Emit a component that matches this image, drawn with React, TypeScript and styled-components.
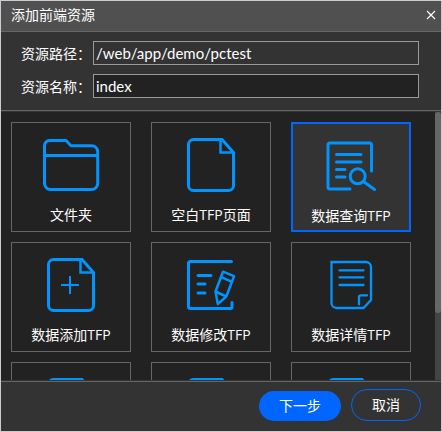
import React, { useState } from "react";
import styled, { createGlobalStyle } from "styled-components";

const GlobalStyle = createGlobalStyle`
  *, *::before, *::after { box-sizing: border-box; }
  body { margin: 0; background: #333; }
  body, button, input {
    font-family: "Open Sans", "Noto Sans CJK SC", sans-serif;
    font-size: 14px;
    line-height: 20px;
    color: #fff;
  }
`;

const Dialog = styled.section`
  display: flex;
  flex-direction: column;
  height: 100vh;
  border: 1px solid #ccc;
  background: #333;
`;

const TitleBar = styled.header`
  display: flex;
  align-items: center;
  justify-content: space-between;
  height: 31px;
  padding: 0 5px 2px 10px;
  background: #505050;
  border-bottom: 1px solid #666;
`;

const Title = styled.h1`
  margin: 0;
  font-size: 14px;
  font-weight: 400;
`;

const CloseButton = styled.button`
  display: flex;
  padding: 0;
  border: 0;
  background: none;
  cursor: pointer;
`;

const Form = styled.form`
  display: flex;
  flex-direction: column;
  gap: 9px;
  padding: 9px 22px 12px 20px;
  border-bottom: 1px solid #666;
`;

const Field = styled.div`
  display: flex;
  align-items: center;
`;

const FieldLabel = styled.label`
  flex: 0 0 72px;
  padding-top: 2px;
`;

const TextInput = styled.input`
  flex: 1;
  min-width: 0;
  height: 24px;
  padding: 0 2px;
  border: 1px solid #999;
  border-radius: 0;
  outline: 0;
  background: #222;
  font-family: Lato, "Noto Sans CJK SC", sans-serif;
  font-size: 15px;

  &:read-only { background: #333; }
`;

const ListArea = styled.main`
  display: flex;
  flex: 1;
  min-height: 0;
  border-top: 1px solid #333;
  border-bottom: 1px solid #333;
  background: #222;
`;

const CardGrid = styled.div`
  display: grid;
  flex: 1;
  grid-template-columns: repeat(auto-fill, 120px);
  align-content: start;
  gap: 10px 20px;
  padding: 10px;
  overflow: hidden;
`;

const Card = styled.button<{ $selected: boolean }>`
  display: flex;
  flex-direction: column;
  align-items: center;
  justify-content: flex-start;
  gap: 10px;
  height: 110px;
  padding: 12px 0 0;
  border: ${(p) => (p.$selected ? "2px solid #06f" : "1px solid #666")};
  background: ${(p) => (p.$selected ? "#333" : "#222")};
  cursor: pointer;
`;

const CardLabel = styled.span`
  height: 20px;
`;

const ScrollTrack = styled.div`
  flex: 0 0 6px;
  background: #444;
`;

const ScrollThumb = styled.div`
  height: 75%;
  border-radius: 3px;
  background: #666;
`;

const Footer = styled.footer`
  display: flex;
  align-items: flex-end;
  justify-content: flex-end;
  gap: 10px;
  height: 50px;
  padding: 0 20px 10px;
  border-top: 1px solid #666;
`;

const ActionButton = styled.button<{ $primary?: boolean }>`
  height: ${(p) => (p.$primary ? "30px" : "32px")};
  padding: 0 20px;
  border: ${(p) => (p.$primary ? "0" : "1px solid #06f")};
  border-radius: 16px;
  background: ${(p) => (p.$primary ? "#06f" : "transparent")};
  cursor: pointer;
`;

const IconSvg = styled.svg`
  display: block;
  flex: none;
  fill: none;
  stroke: #0094ff;
  stroke-width: 3;
  stroke-linejoin: round;
  stroke-linecap: round;
`;

type IconName = "folder" | "page" | "query" | "add" | "edit" | "detail";

const pageOutline = (
  <>
    <path d="M41 4.5H12.5a5 5 0 0 0-5 5v41a5 5 0 0 0 5 5h35a5 5 0 0 0 5-5V17.5z" strokeLinejoin="miter" />
    <path d="M39.5 5v12.5h12.5" strokeWidth="2.5" strokeLinejoin="miter" />
  </>
);

const drawings: Record<IconName, React.ReactNode> = {
  folder: (
    <path d="M3.5 20.5h53M8.5 5.5H25l5 5.3h20.7a6 6 0 0 1 6 6v31.7a6 6 0 0 1-6 6H9.5a6 6 0 0 1-6-6v-38a5 5 0 0 1 5-5z" />
  ),
  page: pageOutline,
  query: (
    <>
      <path d="M29 53H9a2 2 0 0 1-2-2V9a2 2 0 0 1 2-2h39.5a2 2 0 0 1 2 2v26" />
      <path d="M15.5 18.5H40M15.5 26H40M15.5 33.5H24M15.5 41H24" />
      <circle cx="36.7" cy="40.3" r="7.5" />
      <path d="M42.5 45.5l11 8" />
    </>
  ),
  add: (
    <>
      {pageOutline}
      <path d="M20 30h18M29 21v18" strokeWidth="2" strokeLinecap="butt" />
    </>
  ),
  edit: (
    <>
      <path d="M50.5 6.5h-41a2 2 0 0 0-2 2v43a2 2 0 0 0 2 2h40a1.5 1.5 0 0 0 1.5-1.5v-4.5" />
      <path d="M17 20.5h13M17 29h7M17 38h7" />
      <path
        d="M42 16.7l11 4.5L45.3 41.5 36.8 49l-2.3-12.5zM40.3 22.2l10.7 4.6M34.5 36.5l10.8 5"
        strokeWidth="2.5"
      />
    </>
  ),
  detail: (
    <g strokeWidth="2.3">
      <path
        d="M10.5 7H45a5 5 0 0 1 5 5v33l-7.5 8h-27a5 5 0 0 1-5-5z"
        strokeLinejoin="miter"
      />
      <path d="M18.5 15.3h24M18.5 22.3h24M18.5 30h24M46 40.3h-6a2 2 0 0 0-2 2v7" />
    </g>
  ),
};

const Icon = ({ name }: { name: IconName }) => (
  <IconSvg width="60" height="60" viewBox="0 0 60 60" aria-hidden="true">
    {drawings[name]}
  </IconSvg>
);

const cards: { icon: IconName; label: string }[] = [
  { icon: "folder", label: "文件夹" },
  { icon: "page", label: "空白TFP页面" },
  { icon: "query", label: "数据查询TFP" },
  { icon: "add", label: "数据添加TFP" },
  { icon: "edit", label: "数据修改TFP" },
  { icon: "detail", label: "数据详情TFP" },
  { icon: "page", label: "" },
  { icon: "page", label: "" },
  { icon: "page", label: "" },
];

export default function App() {
  const [selected, setSelected] = useState(2);
  const [name, setName] = useState("index");

  return (
    <>
      <GlobalStyle />
      <Dialog>
        <TitleBar>
          <Title>添加前端资源</Title>
          <CloseButton type="button">
            <svg width="10" height="10" viewBox="0 0 10 10" stroke="#fff" strokeWidth="1.2">
              <path d="M1 1l8 8M9 1L1 9" />
            </svg>
          </CloseButton>
        </TitleBar>
        <Form>
          <Field>
            <FieldLabel htmlFor="path">资源路径：</FieldLabel>
            <TextInput id="path" readOnly value="/web/app/demo/pctest" />
          </Field>
          <Field>
            <FieldLabel htmlFor="name">资源名称：</FieldLabel>
            <TextInput id="name" value={name} onChange={(e) => setName(e.target.value)} />
          </Field>
        </Form>
        <ListArea>
          <CardGrid>
            {cards.map((card, i) => (
              <Card key={i} type="button" $selected={i === selected} onClick={() => setSelected(i)}>
                <Icon name={card.icon} />
                <CardLabel>{card.label}</CardLabel>
              </Card>
            ))}
          </CardGrid>
          <ScrollTrack>
            <ScrollThumb />
          </ScrollTrack>
        </ListArea>
        <Footer>
          <ActionButton type="button" $primary>下一步</ActionButton>
          <ActionButton type="button">取消</ActionButton>
        </Footer>
      </Dialog>
    </>
  );
}
